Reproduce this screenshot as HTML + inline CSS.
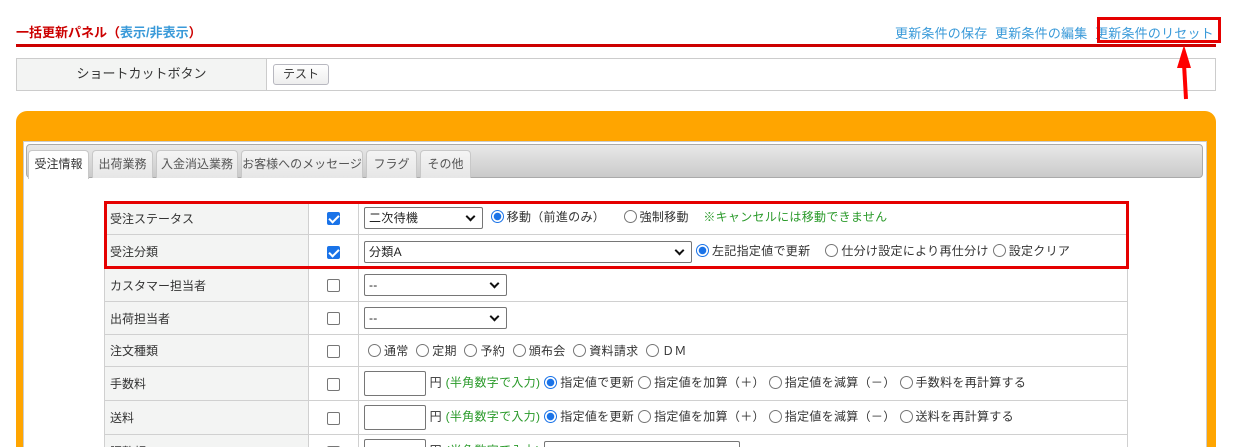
<!DOCTYPE html>
<html><head><meta charset="utf-8"><style>
*{box-sizing:border-box;margin:0;padding:0}
html,body{width:1233px;height:447px;overflow:hidden}
body{background:#fff;font-family:"Liberation Sans","Noto Sans CJK JP",sans-serif;font-size:12px;color:#333;position:relative}
.abs{position:absolute}
a{color:#3a9ad9;text-decoration:none}
.tab{position:absolute;top:150px;height:28px;border:1px solid #c8c8c8;border-bottom:none;border-radius:4px 4px 0 0;background:linear-gradient(#f4f4f4,#e6e6e6);font-size:12px;color:#555;text-align:center;line-height:26px;white-space:nowrap;overflow:hidden}
table{border-collapse:collapse;position:absolute;left:104px;top:201px;width:1024px}
td{border:1px solid #d0d0d0;font-size:12px;color:#333;vertical-align:middle;white-space:nowrap}
td.l{background:#f3f4f3;width:204px;padding-left:5px}
td.c{width:50px;text-align:center}
td.v{padding-left:5px;letter-spacing:0.3px}
.cb{display:inline-block;width:13px;height:13px;border:1px solid #767676;border-radius:2px;background:#fff;vertical-align:middle}
.cb.on{background:#1a73e8;border-color:#1a73e8;position:relative}
.cb.on:after{content:"";position:absolute;left:3px;top:0px;width:4px;height:8px;border:solid #fff;border-width:0 2px 2px 0;transform:rotate(45deg)}
.sel{display:inline-block;height:22px;border:1px solid #767676;border-radius:2px;background:#fff;vertical-align:middle;position:relative;padding-left:4px;line-height:20px;font-size:12px;color:#222}
.sel:after{content:"";position:absolute;right:8px;top:5px;width:5px;height:5px;border:solid #111;border-width:0 2px 2px 0;transform:rotate(45deg)}
.r{display:inline-block;width:13px;height:13px;border:1px solid #767676;border-radius:50%;vertical-align:-2px;margin:0 3px 0 4px;background:#fff}
.r.on{border:1.5px solid #1a73e8;background:radial-gradient(#1a73e8 0 3.5px,#fff 4px)}
.in{display:inline-block;width:62px;height:25px;border:1px solid #767676;vertical-align:middle;border-radius:2px}
.g{color:#2a9a2a}
</style></head><body>
<div class="abs" style="left:16px;top:22px;font-size:13px;color:#cc0000;font-weight:bold">一括更新パネル（<a style="color:#3a9ad9">表示/非表示</a>）</div>
<div class="abs" style="left:895px;top:23px;font-size:13px;letter-spacing:0.2px"><a>更新条件の保存</a>&nbsp;&nbsp;<a>更新条件の編集</a>&nbsp;&nbsp;<a>更新条件のリセット</a></div>
<div class="abs" style="left:1097px;top:17px;width:124px;height:26px;border:3px solid #e50000"></div>
<div class="abs" style="left:16px;top:44px;width:1200px;height:3px;background:#cc0000"></div>
<div class="abs" style="left:16px;top:58px;width:1200px;height:33px;border:1px solid #ccc"></div>
<div class="abs" style="left:17px;top:59px;width:250px;height:31px;background:#f3f4f3;border-right:1px solid #ccc;text-align:center;line-height:29px;font-size:13px;color:#333">ショートカットボタン</div>
<div class="abs" style="left:273px;top:64px;width:56px;height:21px;border:1px solid #b8b8c0;border-radius:3px;background:linear-gradient(#fff,#eee);font-size:12px;text-align:center;line-height:19px;color:#333">テスト</div>
<svg class="abs" style="left:1170px;top:40px" width="30" height="65"><polygon points="14,5 7,28 21,28" fill="#f00"/><line x1="14" y1="24" x2="16" y2="59" stroke="#f00" stroke-width="4"/></svg>
<div class="abs" style="left:16px;top:111px;width:1200px;height:340px;background:#ffa500;border-radius:11px 11px 0 0"></div>
<div class="abs" style="left:23px;top:141px;width:1184px;height:310px;background:#fff;border:1px solid #ccc"></div>
<div class="abs" style="left:26px;top:144px;width:1177px;height:34px;border:1px solid #aaa;border-radius:4px;background:linear-gradient(#e8e8e8,#cacaca)"></div>
<div class="tab" style="left:28px;width:61px;background:#fff;height:29px;color:#333">受注情報</div>
<div class="tab" style="left:92px;width:61px">出荷業務</div>
<div class="tab" style="left:156px;width:82px">入金消込業務</div>
<div class="tab" style="left:241px;width:122px">お客様へのメッセージ</div>
<div class="tab" style="left:366px;width:51px">フラグ</div>
<div class="tab" style="left:420px;width:51px">その他</div>
<table>
<tr style="height:33px"><td class="l">受注ステータス</td><td class="c"><span class="cb on"></span></td><td class="v"><span class="sel" style="width:119px">二次待機</span> <span class="r on"></span>移動（前進のみ）&nbsp;&nbsp;&nbsp; <span class="r"></span>強制移動&nbsp;&nbsp;&nbsp; <span class="g">※キャンセルには移動できません</span></td></tr>
<tr style="height:34px"><td class="l">受注分類</td><td class="c"><span class="cb on"></span></td><td class="v"><span class="sel" style="width:328px">分類A</span><span class="r on"></span>左記指定値で更新&nbsp;&nbsp;&nbsp;<span class="r"></span>仕分け設定により再仕分け<span class="r"></span>設定クリア</td></tr>
<tr style="height:33px"><td class="l">カスタマー担当者</td><td class="c"><span class="cb"></span></td><td class="v"><span class="sel" style="width:143px">--</span></td></tr>
<tr style="height:33px"><td class="l">出荷担当者</td><td class="c"><span class="cb"></span></td><td class="v"><span class="sel" style="width:143px">--</span></td></tr>
<tr style="height:32px"><td class="l">注文種類</td><td class="c"><span class="cb"></span></td><td class="v"><span class="r"></span>通常 <span class="r"></span>定期 <span class="r"></span>予約 <span class="r"></span>頒布会 <span class="r"></span>資料請求 <span class="r"></span>ＤＭ</td></tr>
<tr style="height:34px"><td class="l">手数料</td><td class="c"><span class="cb"></span></td><td class="v"><span class="in"></span> 円 <span class="g">(半角数字で入力)</span><span class="r on"></span>指定値で更新<span class="r"></span>指定値を加算（＋）<span class="r"></span>指定値を減算（－）<span class="r"></span>手数料を再計算する</td></tr>
<tr style="height:34px"><td class="l">送料</td><td class="c"><span class="cb"></span></td><td class="v"><span class="in"></span> 円 <span class="g">(半角数字で入力)</span><span class="r on"></span>指定値を更新<span class="r"></span>指定値を加算（＋）<span class="r"></span>指定値を減算（－）<span class="r"></span>送料を再計算する</td></tr>
<tr style="height:34px"><td class="l">調整額</td><td class="c"><span class="cb"></span></td><td class="v"><span class="in"></span> 円 <span class="g">(半角数字で入力)</span> <span class="sel" style="width:196px">--</span></td></tr>
</table>
<div class="abs" style="left:104px;top:201px;width:1025px;height:68px;border:3px solid #e50000"></div>
</body></html>
